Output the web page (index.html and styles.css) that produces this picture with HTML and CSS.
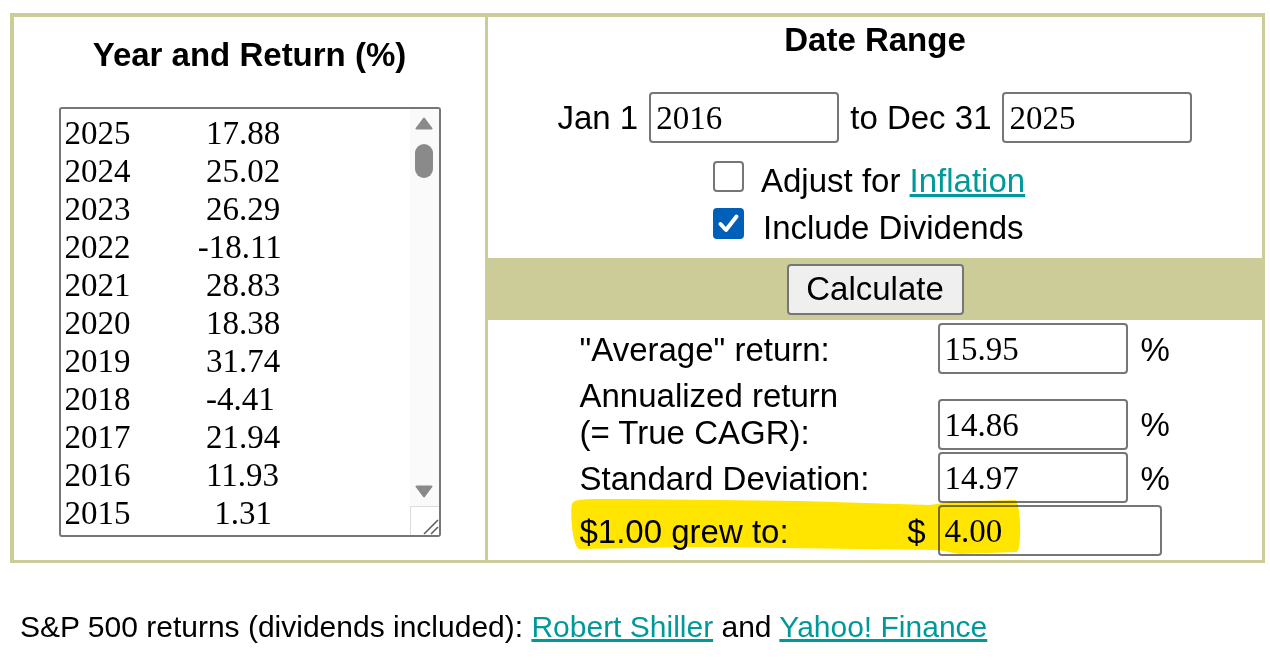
FILE: index.html
```html
<!DOCTYPE html>
<html lang="en">
<head>
<meta charset="utf-8">
<title>S&amp;P 500 Return Calculator</title>
<link rel="stylesheet" href="styles.css">
</head>
<body>
<div class="calc">
  <section class="col-left">
    <h2 class="title">Year and Return (%)</h2>
    <div class="listbox">
      <div class="list">
        <div class="row"><span class="yr">2025</span><span>  17.88</span></div>
        <div class="row"><span class="yr">2024</span><span>  25.02</span></div>
        <div class="row"><span class="yr">2023</span><span>  26.29</span></div>
        <div class="row"><span class="yr">2022</span><span> -18.11</span></div>
        <div class="row"><span class="yr">2021</span><span>  28.83</span></div>
        <div class="row"><span class="yr">2020</span><span>  18.38</span></div>
        <div class="row"><span class="yr">2019</span><span>  31.74</span></div>
        <div class="row"><span class="yr">2018</span><span>  -4.41</span></div>
        <div class="row"><span class="yr">2017</span><span>  21.94</span></div>
        <div class="row"><span class="yr">2016</span><span>  11.93</span></div>
        <div class="row"><span class="yr">2015</span><span>   1.31</span></div>
      </div>
      <div class="sbar">
        <div class="sb-btn">
          <svg width="18" height="13" viewBox="0 0 18 13"><path d="M9 1.5 L16.5 11.5 L1.5 11.5 Z" fill="#8a8a8a" stroke="#8a8a8a" stroke-width="2" stroke-linejoin="round"/></svg>
        </div>
        <div class="thumb"></div>
        <div class="sb-fill"></div>
        <div class="sb-btn">
          <svg width="18" height="13" viewBox="0 0 18 13"><path d="M9 11.5 L16.5 1.5 L1.5 1.5 Z" fill="#8a8a8a" stroke="#8a8a8a" stroke-width="2" stroke-linejoin="round"/></svg>
        </div>
        <div class="grip">
          <svg width="28" height="28" viewBox="0 0 28 28"><path d="M13 27 L27 13 M20 27 L27 20" stroke="#5a5a5a" stroke-width="1.5" fill="none"/></svg>
        </div>
      </div>
    </div>
  </section>

  <section class="col-right">
    <div class="range">
      <h2 class="title">Date Range</h2>
      <div class="dates">
        <span>Jan 1</span>
        <input class="field" type="text" value="2016">
        <span>to Dec 31</span>
        <input class="field" type="text" value="2025">
      </div>
      <div class="opts">
        <label class="opt"><span class="box"></span><span>Adjust for <a href="#">Inflation</a></span></label>
        <label class="opt"><span class="box checked"><svg width="27" height="27" viewBox="0 0 27 27"><path d="M5.5 14 L11 20 L21.5 6.5" stroke="#fff" stroke-width="4" fill="none" stroke-linecap="round" stroke-linejoin="round"/></svg></span><span class="lbl-i">Include Dividends</span></label>
      </div>
    </div>
    <div class="band"><button class="btn" type="button">Calculate</button></div>
    <div class="results">
      <div class="lbl">"Average" return:</div>
      <input class="field out" type="text" value="15.95">
      <div class="pct">%</div>

      <div class="lbl">Annualized return<br>(= True CAGR):</div>
      <input class="field out end" type="text" value="14.86">
      <div class="pct end">%</div>

      <div class="lbl">Standard Deviation:</div>
      <input class="field out" type="text" value="14.97">
      <div class="pct">%</div>

      <div class="lbl split"><span>$1.00 grew to:</span><span>$</span></div>
      <input class="field out wide" type="text" value="4.00">

      <svg class="marker" width="460" height="64" viewBox="0 0 460 64"><path d="M4 10 C6 4, 22 5, 52 5 L232 7 L362 11 L382 8 L447 6 C453 8, 454 54, 449 58 L392 60 L370 56 L132 53 L12 55 C4 55, 2 16, 4 10 Z" fill="#ffe500"/></svg>
    </div>
  </section>
</div>

<p class="source">S&amp;P 500 returns (dividends included): <a href="#">Robert Shiller</a> and <a href="#">Yahoo! Finance</a></p>
</body>
</html>
```

FILE: styles.css
```css
* {
  box-sizing: border-box;
}

body {
  margin: 0;
  padding: 13px 0 0 10px;
  font-family: "Liberation Sans", Arial, sans-serif;
  color: #000;
  background: #fff;
}

a {
  color: #009999;
  text-decoration: underline;
}

.calc {
  display: grid;
  grid-template-columns: 474px 774px;
  width: 1255px;
  height: 550px;
  border-style: solid;
  border-color: #cccc99;
  border-width: 4px 3px 3px 4px;
}

.title {
  margin: 0;
  font-size: 33px;
  line-height: 38px;
  font-weight: bold;
  text-align: center;
}

/* Left column */
.col-left {
  border-right: 3px solid #cccc99;
  padding-top: 19px;
  display: flex;
  flex-direction: column;
  align-items: center;
}

.listbox {
  margin-top: 33px;
  width: 382px;
  height: 430px;
  border: 2px solid #767676;
  border-radius: 3px;
  display: flex;
  overflow: hidden;
  background: #fff;
}

.list {
  flex: 1;
  padding: 5px 0 0 4px;
  font-family: "Liberation Serif", "Times New Roman", serif;
  font-size: 33px;
  line-height: 38px;
  overflow: hidden;
}

.row {
  display: flex;
  white-space: pre;
}

.yr {
  width: 125px;
}

.sbar {
  width: 29px;
  background: #fafafa;
  display: flex;
  flex-direction: column;
  align-items: center;
}

.sb-btn {
  width: 100%;
  height: 29px;
  display: flex;
  align-items: center;
  justify-content: center;
}

.sb-btn svg {
  display: block;
}

.thumb {
  margin-top: 6px;
  width: 18px;
  height: 34px;
  border-radius: 9px;
  background: #8a8a8a;
}

.sb-fill {
  flex: 1;
}

.grip {
  width: 100%;
  height: 29px;
  border-top: 1px solid #dcdcdc;
  border-left: 1px solid #dcdcdc;
  background: #fff;
}

.grip svg {
  display: block;
}

/* Right column */
.col-right {
  display: flex;
  flex-direction: column;
}

.range {
  padding: 4px 0 8px;
}

.dates {
  margin-top: 33px;
  display: flex;
  justify-content: center;
  align-items: center;
  gap: 11px;
  font-size: 33px;
  line-height: 38px;
}

.field {
  width: 190px;
  height: 51px;
  margin: 0;
  border: 2px solid #767676;
  border-radius: 4px;
  padding: 2px 5px 0;
  font-family: "Liberation Serif", "Times New Roman", serif;
  font-size: 33px;
  color: #000;
  background: #fff;
}

.opts {
  margin-top: 13px;
  padding-left: 225px;
  display: flex;
  flex-direction: column;
}

.opt {
  height: 47px;
  display: flex;
  align-items: center;
  gap: 17px;
  font-size: 33px;
  line-height: 38px;
  padding-top: 2px;
}

.lbl-i {
  padding-left: 2px;
}

.box {
  width: 31px;
  height: 31px;
  margin-bottom: 9px;
  border: 2px solid #767676;
  border-radius: 4px;
  background: #fff;
  display: flex;
  align-items: center;
  justify-content: center;
}

.box.checked {
  background: #005fb8;
  border-color: #005fb8;
}

.band {
  height: 62px;
  background: #cccc99;
  display: flex;
  align-items: center;
  justify-content: center;
}

.btn {
  width: 177px;
  height: 51px;
  padding: 0;
  font-family: "Liberation Sans", Arial, sans-serif;
  font-size: 33px;
  color: #000;
  background: #efefef;
  border: 2px solid #767676;
  border-radius: 4px;
}

.results {
  position: relative;
  flex: 1;
  padding-top: 3px;
  display: grid;
  grid-template-columns: 356px 192px 43px;
  grid-template-rows: 51px 74px 51px 51px;
  row-gap: 2px;
  justify-content: center;
  align-items: center;
  font-size: 33px;
  line-height: 37px;
}

.lbl {
  padding-top: 2px;
}

.lbl.split {
  display: flex;
  justify-content: space-between;
  padding-right: 10px;
}

.out {
  margin-left: 2px;
}

.out.wide {
  grid-column: 2 / 4;
  width: 224px;
}

.pct {
  padding-left: 13px;
  padding-top: 2px;
  line-height: 51px;
}

.end {
  align-self: end;
}

.marker {
  position: absolute;
  left: 80px;
  top: 174px;
  mix-blend-mode: multiply;
  pointer-events: none;
}

.source {
  margin: 47px 0 0 10px;
  font-size: 30px;
  line-height: 34px;
}
```
